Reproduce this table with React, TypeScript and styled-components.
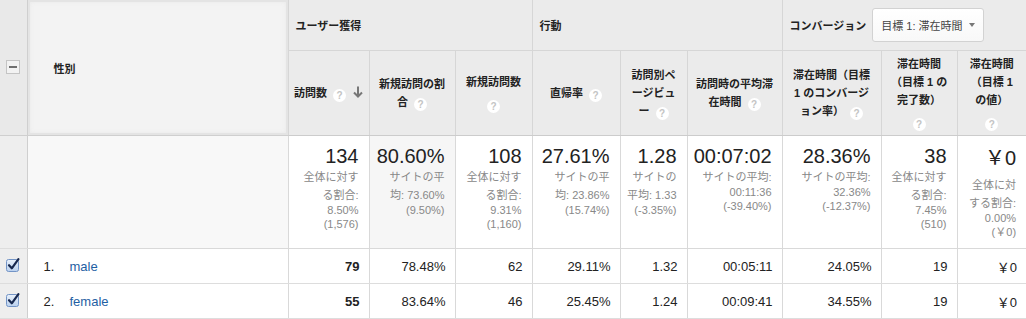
import React, { ReactElement } from 'react';
import styled, { createGlobalStyle } from 'styled-components';

const GlobalStyle = createGlobalStyle`
  html, body {
    margin: 0;
    padding: 0;
    background: #fff;
    overflow: hidden;
  }
  body {
    font-family: "Liberation Sans", "Noto Sans CJK JP", sans-serif;
  }
`;

const Table = styled.table`
  width: 1026px;
  table-layout: fixed;
  border-collapse: collapse;
  font-size: 11px;
  color: #222;
`;

const Col = styled.col<{ $w: number }>`
  width: ${(p) => p.$w}px;
`;

const CheckHead = styled.th`
  background: #e9e9e9;
  border-right: 1px solid #cfcfcf;
  border-bottom: 1px solid #cfcfcf;
  padding: 0;
  text-align: center;
  vertical-align: middle;
`;

const DimHead = styled.th`
  background: #f3f3f3;
  box-shadow: inset 0 0 0 2px #e4e4e4, inset 0 0 4px 2px #e9e9e9;
  border-bottom: 1px solid #cfcfcf;
  text-align: left;
  padding: 0 0 0 26px;
  font-size: 11px;
  font-weight: bold;
  vertical-align: middle;
`;

const GroupHead = styled.th`
  height: 50px;
  background: #ebebeb;
  border-left: 1px solid #d6d6d6;
  border-bottom: 1px solid #d6d6d6;
  text-align: left;
  padding: 0 7px;
  font-size: 11px;
  font-weight: bold;
  vertical-align: middle;
  white-space: nowrap;
`;

const GroupInner = styled.div`
  display: flex;
  align-items: center;
  gap: 6px;
`;

const Select = styled.div`
  display: inline-flex;
  align-items: center;
  justify-content: space-between;
  box-sizing: border-box;
  width: 112px;
  height: 34px;
  padding: 0 8px;
  background: linear-gradient(#ffffff, #f8f8f8);
  border: 1px solid #d2d2d2;
  border-radius: 3px;
  font-weight: normal;
  font-size: 11px;
  color: #444;
`;

const Caret = styled.span`
  width: 0;
  height: 0;
  border-left: 3.5px solid transparent;
  border-right: 3.5px solid transparent;
  border-top: 4px solid #777;
`;

const MetricHead = styled.th`
  height: 84px;
  background: #ebebeb;
  border-left: 1px solid #d6d6d6;
  border-bottom: 1px solid #cccccc;
  text-align: center;
  padding: 0 4px;
  font-size: 11px;
  font-weight: bold;
  line-height: 18px;
  vertical-align: middle;
  white-space: nowrap;
`;

const Help = styled.span`
  display: inline-block;
  width: 13px;
  height: 13px;
  margin-left: 6px;
  border-radius: 50%;
  background: #fff;
  color: #c4c4c4;
  font-family: "Liberation Sans", sans-serif;
  font-size: 10px;
  font-weight: bold;
  line-height: 13px;
  text-align: center;
  vertical-align: -2px;
`;

const HelpLine = styled.span`
  display: block;
  height: 22px;
  padding-top: 4px;
  box-sizing: border-box;
  & > span {
    margin-left: 0;
  }
`;

const SortArrow = styled.svg`
  margin-left: 7px;
  vertical-align: -1px;
`;

const CheckCell = styled.td`
  background: #eeeeee;
  border-right: 1px solid #cfcfcf;
  border-bottom: 1px solid #dddddd;
  padding: 0;
  text-align: center;
  vertical-align: middle;
`;

const DimSum = styled.td`
  background: #f8f8f8;
  border-bottom: 1px solid #d9d9d9;
`;

const SumCell = styled.td<{ $shade?: boolean }>`
  height: 104px;
  padding: 8px 10px 0 4px;
  background: ${(p) => (p.$shade ? '#f6f6f6' : '#fff')};
  border-left: 1px solid #d9d9d9;
  border-bottom: 1px solid #d9d9d9;
  text-align: right;
  vertical-align: top;
  white-space: nowrap;
`;

const Big = styled.div<{ $cjk?: boolean }>`
  font-size: 20px;
  line-height: 24px;
  color: #222;
  padding-top: ${(p) => (p.$cjk ? '2px' : '0')};
  margin-bottom: ${(p) => (p.$cjk ? '6px' : '0')};
`;

const Sub = styled.div<{ $jp?: boolean }>`
  font-size: 11px;
  color: #888;
  line-height: ${(p) => (p.$jp ? '18px' : '13.5px')};
`;

const DimCell = styled.td`
  height: 34px;
  padding: 0 0 0 16px;
  border-bottom: 1px solid #dddddd;
  font-size: 13px;
  vertical-align: middle;
  white-space: nowrap;
`;

const Index = styled.span`
  display: inline-block;
  width: 26px;
  color: #222;
`;

const DimLink = styled.a`
  color: #1f5fa3;
  text-decoration: none;
`;

const DataCell = styled.td<{ $bold?: boolean }>`
  padding: 0 9px 0 4px;
  border-left: 1px solid #d9d9d9;
  border-bottom: 1px solid #dddddd;
  font-size: 13px;
  font-weight: ${(p) => (p.$bold ? 'bold' : 'normal')};
  text-align: right;
  vertical-align: middle;
  white-space: nowrap;
`;

const widths = [27, 261, 81, 86, 77, 88, 67, 95, 99, 76, 69];

const Q = () => <Help>?</Help>;

const CheckMark = () => (
  <svg width="14" height="14" viewBox="0 0 14 14">
    <defs>
      <linearGradient id="cbg" x1="0" y1="0" x2="0" y2="1">
        <stop offset="0" stopColor="#e9f1fb" />
        <stop offset="1" stopColor="#b9d0ee" />
      </linearGradient>
    </defs>
    <rect x="0.5" y="1.5" width="12" height="12" rx="2" fill="url(#cbg)" stroke="#7394c6" />
    <path d="M3 7.2 L5.8 10.3 L12.4 1.2" fill="none" stroke="#17284f" strokeWidth="2.2" strokeLinecap="round" strokeLinejoin="round" />
  </svg>
);

const MinusBox = () => (
  <svg width="14" height="14" viewBox="0 0 14 14">
    <rect x="0.5" y="0.5" width="13" height="13" fill="#f2f2f2" stroke="#c4c4c4" />
    <rect x="3" y="6" width="8" height="2" fill="#6f6f6f" />
  </svg>
);

type Line = { t: string; jp?: boolean };
type Summary = { big: string; cjk?: boolean; shade?: boolean; lines: Line[] };

const share = (pct: string, total: string, first = '全体に対す', second = 'る割合:'): Line[] => [
  { t: first, jp: true },
  { t: second, jp: true },
  { t: pct },
  { t: total },
];

const avg = (a: string, b: string, c: string, split: boolean): Line[] =>
  split
    ? [{ t: a, jp: true }, { t: b, jp: true }, { t: c }]
    : [{ t: a, jp: true }, { t: b }, { t: c }];

const summary: Summary[] = [
  { big: '134', lines: share('8.50%', '(1,576)') },
  { big: '80.60%', shade: true, lines: avg('サイトの平', '均: 73.60%', '(9.50%)', true) },
  { big: '108', lines: share('9.31%', '(1,160)') },
  { big: '27.61%', lines: avg('サイトの平', '均: 23.86%', '(15.74%)', true) },
  { big: '1.28', lines: avg('サイトの', '平均: 1.33', '(-3.35%)', true) },
  { big: '00:07:02', lines: avg('サイトの平均:', '00:11:36', '(-39.40%)', false) },
  { big: '28.36%', lines: avg('サイトの平均:', '32.36%', '(-12.37%)', false) },
  { big: '38', lines: share('7.45%', '(510)') },
  { big: '￥0', cjk: true, lines: share('0.00%', '(￥0)', '全体に対', 'する割合:') },
];

const rows = [
  { n: 1, name: 'male', v: ['79', '78.48%', '62', '29.11%', '1.32', '00:05:11', '24.05%', '19', '￥0'] },
  { n: 2, name: 'female', v: ['55', '83.64%', '46', '25.45%', '1.24', '00:09:41', '34.55%', '19', '￥0'] },
];

export default function App(): ReactElement {
  return (
    <>
      <GlobalStyle />
      <Table>
        <colgroup>
          {widths.map((w, i) => (
            <Col key={i} $w={w} />
          ))}
        </colgroup>
        <thead>
          <tr>
            <CheckHead rowSpan={2}>
              <MinusBox />
            </CheckHead>
            <DimHead rowSpan={2}>性別</DimHead>
            <GroupHead colSpan={3}>ユーザー獲得</GroupHead>
            <GroupHead colSpan={3}>行動</GroupHead>
            <GroupHead colSpan={3}>
              <GroupInner>
                コンバージョン
                <Select>
                  目標 1: 滞在時間
                  <Caret />
                </Select>
              </GroupInner>
            </GroupHead>
          </tr>
          <tr>
            <MetricHead>
              訪問数
              <Q />
              <SortArrow width="10" height="12" viewBox="0 0 10 12">
                <path d="M5 0.5 V10.5 M1 6.5 L5 10.5 L9 6.5" fill="none" stroke="#777" strokeWidth="2" />
              </SortArrow>
            </MetricHead>
            <MetricHead>
              新規訪問の割
              <br />
              合<Q />
            </MetricHead>
            <MetricHead>
              新規訪問数
              <HelpLine>
                <Q />
              </HelpLine>
            </MetricHead>
            <MetricHead>
              直帰率
              <Q />
            </MetricHead>
            <MetricHead>
              訪問別ペ
              <br />
              ージビュ
              <br />
              ー<Q />
            </MetricHead>
            <MetricHead>
              訪問時の平均滞
              <br />
              在時間
              <Q />
            </MetricHead>
            <MetricHead>
              滞在時間（目標
              <br />1 のコンバージ
              <br />
              ョン率）
              <Q />
            </MetricHead>
            <MetricHead>
              滞在時間
              <br />
              （目標 1 の
              <br />
              完了数）
              <HelpLine>
                <Q />
              </HelpLine>
            </MetricHead>
            <MetricHead>
              滞在時間
              <br />
              （目標 1
              <br />
              の値）
              <HelpLine>
                <Q />
              </HelpLine>
            </MetricHead>
          </tr>
        </thead>
        <tbody>
          <tr>
            <CheckCell />
            <DimSum />
            {summary.map((s, i) => (
              <SumCell key={i} $shade={s.shade}>
                <Big $cjk={s.cjk}>{s.big}</Big>
                {s.lines.map((l, j) => (
                  <Sub key={j} $jp={l.jp}>
                    {l.t}
                  </Sub>
                ))}
              </SumCell>
            ))}
          </tr>
          {rows.map((r) => (
            <tr key={r.n}>
              <CheckCell>
                <CheckMark />
              </CheckCell>
              <DimCell>
                <Index>{r.n}.</Index>
                <DimLink href="#">{r.name}</DimLink>
              </DimCell>
              {r.v.map((v, i) => (
                <DataCell key={i} $bold={i === 0}>
                  {v}
                </DataCell>
              ))}
            </tr>
          ))}
        </tbody>
      </Table>
    </>
  );
}
